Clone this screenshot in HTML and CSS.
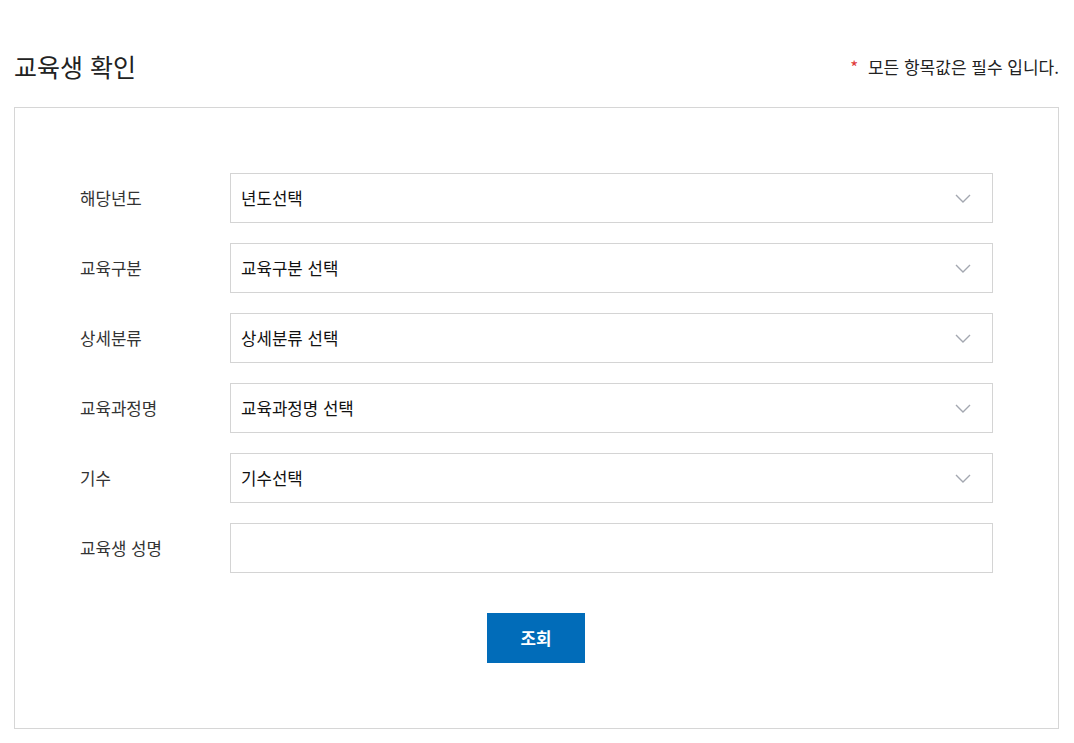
FILE: index.html
```html
<!DOCTYPE html>
<html lang="ko">
<head>
    <meta charset="UTF-8">
    <meta name="viewport" content="width=device-width, initial-scale=1.0">
    <title>교육생 확인</title>
    <link rel="stylesheet" href="styles.css">
</head>
<body>
    <div class="wrap">
        <div class="page-head">
            <h1>교육생 확인</h1>
            <p class="notice"><span class="req">*</span> 모든 항목값은 필수 입니다.</p>
        </div>

        <div class="form-box">
            <div class="form-row">
                <label class="form-label">해당년도</label>
                <div class="select-box">
                    <span>년도선택</span>
                    <svg class="chevron" viewBox="0 0 16 9"><path d="M1 1l7 7 7-7"/></svg>
                </div>
            </div>
            <div class="form-row">
                <label class="form-label">교육구분</label>
                <div class="select-box">
                    <span>교육구분 선택</span>
                    <svg class="chevron" viewBox="0 0 16 9"><path d="M1 1l7 7 7-7"/></svg>
                </div>
            </div>
            <div class="form-row">
                <label class="form-label">상세분류</label>
                <div class="select-box">
                    <span>상세분류 선택</span>
                    <svg class="chevron" viewBox="0 0 16 9"><path d="M1 1l7 7 7-7"/></svg>
                </div>
            </div>
            <div class="form-row">
                <label class="form-label">교육과정명</label>
                <div class="select-box">
                    <span>교육과정명 선택</span>
                    <svg class="chevron" viewBox="0 0 16 9"><path d="M1 1l7 7 7-7"/></svg>
                </div>
            </div>
            <div class="form-row">
                <label class="form-label">기수</label>
                <div class="select-box">
                    <span>기수선택</span>
                    <svg class="chevron" viewBox="0 0 16 9"><path d="M1 1l7 7 7-7"/></svg>
                </div>
            </div>
            <div class="form-row">
                <label class="form-label" for="name">교육생 성명</label>
                <input type="text" class="text-input" id="name">
            </div>

            <div class="form-actions">
                <button class="btn">조회</button>
            </div>
        </div>
    </div>
</body>
</html>
```

FILE: styles.css
```css
body {
    margin: 0;
    font-family: "Noto Sans CJK KR", "Noto Sans", sans-serif;
    color: #333;
    background: #fff;
}
.wrap {
    width: 1045px;
    padding: 0 15px 0 14px;
}
.page-head {
    display: flex;
    justify-content: space-between;
    align-items: center;
    padding-top: 48px;
    height: 36px;
    margin-bottom: 23px;
}
h1 {
    margin: 0;
    font-size: 25px;
    font-weight: 400;
    line-height: 36px;
    color: #222;
}
.notice {
    margin: 0;
    font-size: 17px;
    color: #222;
}
.req {
    color: #e03a3a;
    margin-right: 5px;
}
.form-box {
    border: 1px solid #d6d6d6;
    padding: 65px;
    display: flex;
    flex-direction: column;
    gap: 20px;
}
.form-row {
    display: flex;
    align-items: center;
}
.form-label {
    width: 150px;
    flex: none;
    font-size: 16.8px;
    color: #333;
}
.select-box,
.text-input {
    flex: 1;
    height: 50px;
    box-sizing: border-box;
    border: 1px solid #d4d4d4;
    background: #fff;
}
.select-box {
    display: flex;
    align-items: center;
    justify-content: space-between;
    padding: 0 21px 0 10px;
    font-size: 16.8px;
    color: #111;
}
.text-input {
    font-family: inherit;
    font-size: 16.8px;
    padding: 0 10px;
    margin: 0;
    outline: none;
}
.chevron {
    width: 16px;
    height: 9px;
    fill: none;
    stroke: #a3a7b0;
    stroke-width: 1.4;
}
.form-actions {
    display: flex;
    justify-content: center;
    margin-top: 20px;
}
.btn {
    width: 98px;
    height: 50px;
    margin-right: 1px;
    border: none;
    background-color: #016cb9;
    color: #fff;
    font-family: inherit;
    font-size: 16.8px;
    font-weight: 700;
    cursor: pointer;
}
```
